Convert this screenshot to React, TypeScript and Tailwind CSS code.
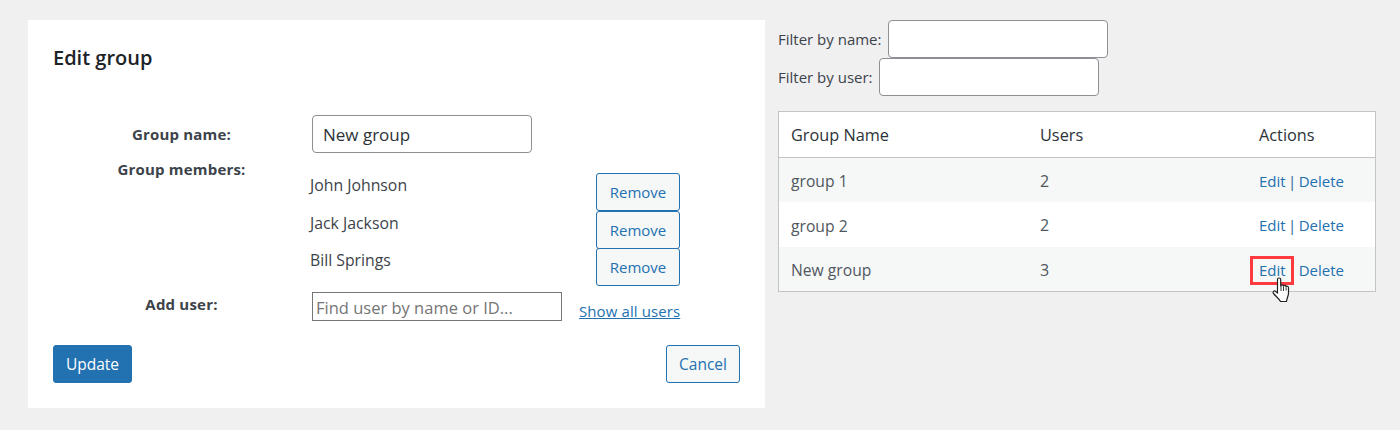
// Edit group form next to the groups table

const rows = [
  { name: 'group 1', users: 2, bg: 'bg-[#f6f7f7]' },
  { name: 'group 2', users: 2, bg: 'bg-white' },
  { name: 'New group', users: 3, bg: 'bg-[#f6f7f7]' },
];

const members = [
  { name: 'John Johnson', h: 'h-[38px]' },
  { name: 'Jack Jackson', h: 'h-[37px]' },
  { name: 'Bill Springs', h: 'h-[38px]' },
];

function HandCursor() {
  return (
    <svg width="20" height="26" viewBox="0 0 20 26" className="absolute left-[1271px] top-[277px]">
      <path
        d="M6.500 2.500c0-2 3.200-2 3.200 0V9c.3-1.500 2.700-1.500 2.800.2c.4-1.200 2.500-1 2.600.6c.5-1 2.400-.8 2.400 1V16c0 3-1.500 4.500-2 8.500H9.500c-1-2.500-4.500-5-7-8c-1.300-1.600.7-3.400 2.200-2L6.500 16z"
        fill="#fff"
        stroke="#222"
        strokeWidth="1.200"
        strokeLinejoin="round"
      />
      <path d="M10 9v5M12.500 10v4M15.100 10.500v3" stroke="#222" strokeWidth="0.900" fill="none" />
    </svg>
  );
}

export default function App() {
  return (
    <div className="relative flex h-[430px] w-[1400px] items-start gap-[13px] overflow-hidden bg-[#f0f0f1] pl-[28px] pt-[20px] font-['Open_Sans','Noto_Sans',sans-serif] text-[15px] text-[#3c434a]">
      {/* Edit form */}
      <div className="h-[388px] w-[737px] bg-white px-[25px]">
        <h2 className="mt-[24px] h-[71px] text-[20px] leading-[28px] font-semibold text-[#1d2327]">Edit group</h2>

        <div className="flex h-[45px]">
          <div className="w-[257px] pt-[9px] text-center leading-[20px] font-bold tracking-[0.2px]">Group name:</div>
          <input
            defaultValue="New group"
            className="ml-[2px] h-[38px] w-[220px] rounded-[4px] border border-[#8c8f94] px-[10px] text-[17px] text-[#2c3338]"
          />
        </div>

        <div className="flex h-[132px]">
          <div className="w-[257px] text-center leading-[18px] font-bold tracking-[0.2px]">Group members:</div>
          <div className="pt-[13px]">
            {members.map((m) => (
              <div key={m.name} className={`flex w-[370px] ${m.h}`}>
                <span className="w-[286px] pt-[2px] text-[15.800px] leading-[20px]">{m.name}</span>
                <button className="h-[38px] w-[84px] rounded-[3px] border border-[#2271b1] bg-[#f6f7f7] text-[#2271b1]">
                  Remove
                </button>
              </div>
            ))}
          </div>
        </div>

        <div className="flex h-[53px]">
          <div className="w-[257px] pt-[2px] text-center leading-[20px] font-bold tracking-[0.2px]">Add user:</div>
          <input
            placeholder="Find user by name or ID..."
            className="ml-[2px] h-[29px] w-[250px] border border-[#767676] px-[3px] pt-[1px] text-[16.500px] placeholder:text-[#757575]"
          />
          <a className="ml-[17px] pt-[9px] leading-[20px] tracking-[0.1px] text-[#2271b1] underline">Show all users</a>
        </div>

        <div className="flex justify-between text-[15.500px]">
          <button className="h-[38px] w-[79px] rounded-[3px] border border-[#2271b1] bg-[#2271b1] pt-[1px] text-white">
            Update
          </button>
          <button className="h-[38px] w-[74px] rounded-[3px] border border-[#2271b1] bg-[#f6f7f7] pt-[1px] text-[#2271b1]">
            Cancel
          </button>
        </div>
      </div>

      {/* Groups list */}
      <div className="w-[598px]">
        <label className="flex h-[38px] items-center gap-[7px]">
          Filter by name:
          <input className="h-[38px] w-[220px] rounded-[4px] border border-[#8c8f94] bg-white" />
        </label>
        <label className="flex h-[38px] items-center gap-[6px]">
          Filter by user:
          <input className="h-[38px] w-[220px] rounded-[4px] border border-[#8c8f94] bg-white" />
        </label>

        <div className="mt-[15px] border border-[#c3c4c7]">
          <div className="grid h-[46px] grid-cols-[249px_219px_1fr] items-center border-b border-[#c3c4c7] bg-white pl-[12px] pt-[1px] text-[16.300px] text-[#2c3338]">
            <span>Group Name</span>
            <span>Users</span>
            <span>Actions</span>
          </div>
          {rows.map((r) => (
            <div key={r.name} className={`grid h-[44.330px] grid-cols-[249px_219px_1fr] items-center pl-[12px] pt-[2px] text-[#50575e] ${r.bg}`}>
              <span className="pt-[2px] text-[15.700px]">{r.name}</span>
              <span className="text-[16px]">{r.users}</span>
              <span className="text-[#2271b1] [word-spacing:-1.500px]">
                Edit <span className="text-[#1f5f94]">|</span> Delete
              </span>
            </div>
          ))}
        </div>
      </div>

      {/* Annotation over the last row */}
      <div className="absolute left-[1250px] top-[256px] h-[29px] w-[44px] border-[3px] border-[#ff3b3f]" />
      <HandCursor />
    </div>
  );
}
